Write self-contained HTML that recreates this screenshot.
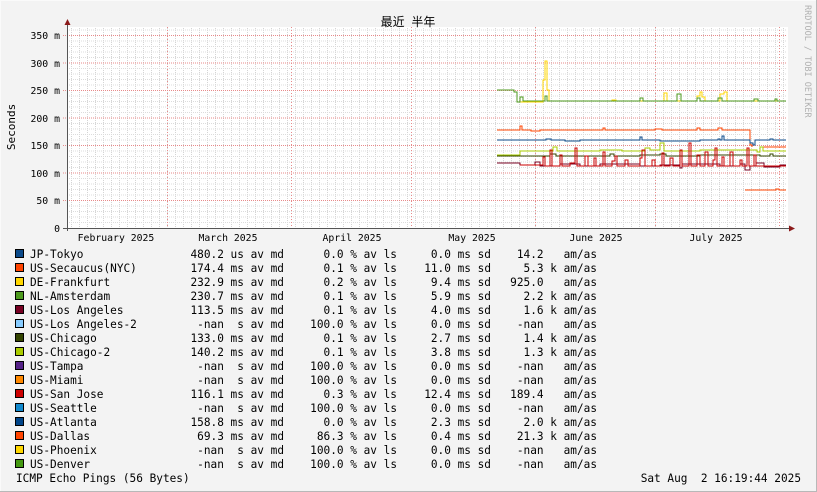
<!DOCTYPE html>
<html><head><meta charset="utf-8"><style>
html,body{margin:0;padding:0;background:#f3f3f3;}
svg{display:block}
text{font-family:"DejaVu Sans Mono","Liberation Mono","Noto Sans CJK SC",monospace;}
</style></head><body>
<svg width="817" height="492" viewBox="0 0 817 492" xmlns="http://www.w3.org/2000/svg">
<defs>
<pattern id="vg" x="71" y="0" width="8" height="2" patternUnits="userSpaceOnUse"><rect x="0" y="0" width="1" height="1" fill="#d4d4d4"/></pattern>
</defs>
<rect x="0" y="0" width="817" height="492" fill="#f3f3f3"/>
<rect x="0.5" y="0.5" width="816" height="491" fill="none" stroke="#d0d0d0"/>
<line x1="0" y1="0.5" x2="817" y2="0.5" stroke="#fafafa"/>
<line x1="0.5" y1="0" x2="0.5" y2="492" stroke="#fafafa"/>
<line x1="0" y1="491.5" x2="817" y2="491.5" stroke="#b8b8b8"/>
<line x1="816.5" y1="0" x2="816.5" y2="492" stroke="#b8b8b8"/>
<rect x="67" y="27" width="721" height="201" fill="#ffffff"/>
<rect x="67" y="27" width="720" height="201" fill="url(#vg)"/>
<g stroke="#dcdcdc" stroke-dasharray="1,1" stroke-width="1">
<line x1="67" x2="787" y1="222.5" y2="222.5"/><line x1="67" x2="787" y1="217" y2="217"/><line x1="67" x2="787" y1="211.5" y2="211.5"/><line x1="67" x2="787" y1="206" y2="206"/>
<line x1="67" x2="787" y1="195" y2="195"/><line x1="67" x2="787" y1="189.5" y2="189.5"/><line x1="67" x2="787" y1="184" y2="184"/><line x1="67" x2="787" y1="178.5" y2="178.5"/>
<line x1="67" x2="787" y1="167.5" y2="167.5"/><line x1="67" x2="787" y1="162" y2="162"/><line x1="67" x2="787" y1="156.5" y2="156.5"/><line x1="67" x2="787" y1="151" y2="151"/>
<line x1="67" x2="787" y1="140" y2="140"/><line x1="67" x2="787" y1="134.5" y2="134.5"/><line x1="67" x2="787" y1="129" y2="129"/><line x1="67" x2="787" y1="123.5" y2="123.5"/>
<line x1="67" x2="787" y1="112.5" y2="112.5"/><line x1="67" x2="787" y1="107" y2="107"/><line x1="67" x2="787" y1="101.5" y2="101.5"/><line x1="67" x2="787" y1="96" y2="96"/>
<line x1="67" x2="787" y1="85" y2="85"/><line x1="67" x2="787" y1="79.5" y2="79.5"/><line x1="67" x2="787" y1="74" y2="74"/><line x1="67" x2="787" y1="68.5" y2="68.5"/>
<line x1="67" x2="787" y1="57.5" y2="57.5"/><line x1="67" x2="787" y1="52" y2="52"/><line x1="67" x2="787" y1="46.5" y2="46.5"/><line x1="67" x2="787" y1="41" y2="41"/>
<line x1="67" x2="787" y1="30" y2="30"/>
</g>
<g stroke="#e88a8a" stroke-dasharray="1,1" stroke-width="1">
<line x1="63" x2="787" y1="200.5" y2="200.5"/><line x1="63" x2="787" y1="173" y2="173"/><line x1="63" x2="787" y1="145.5" y2="145.5"/><line x1="63" x2="787" y1="118" y2="118"/><line x1="63" x2="787" y1="90.5" y2="90.5"/><line x1="63" x2="787" y1="63" y2="63"/><line x1="63" x2="787" y1="35.5" y2="35.5"/>
</g>
<g fill="#e88a8a">
<rect x="167" y="27" width="1" height="204" fill="none"/>
</g>
<g stroke="#e88a8a" stroke-dasharray="1,2" stroke-width="1">
<line x1="167.5" x2="167.5" y1="27" y2="231"/><line x1="291.5" x2="291.5" y1="27" y2="231"/><line x1="411.5" x2="411.5" y1="27" y2="231"/><line x1="535.5" x2="535.5" y1="27" y2="231"/><line x1="655.5" x2="655.5" y1="27" y2="231"/><line x1="779.5" x2="779.5" y1="27" y2="231"/>
</g>
<line x1="67.5" y1="24" x2="67.5" y2="231" stroke="#555" />
<line x1="63" y1="228.5" x2="792" y2="228.5" stroke="#555"/>
<polygon points="64.5,25 70.5,25 67.5,19" fill="#8b1a1a"/>
<polygon points="789,225.5 789,231.5 795,228.5" fill="#8b1a1a"/>
<g font-size="9.8" fill="#000" text-anchor="end">
<text x="60" y="232">0</text><text x="60" y="204">50 m</text><text x="60" y="177">100 m</text><text x="60" y="149">150 m</text><text x="60" y="122">200 m</text><text x="60" y="94">250 m</text><text x="60" y="67">300 m</text><text x="60" y="39">350 m</text>
</g>
<g font-size="9.8" fill="#000" text-anchor="middle">
<text x="116" y="241">February 2025</text><text x="228" y="241">March 2025</text><text x="352" y="241">April 2025</text><text x="472" y="241">May 2025</text><text x="596" y="241">June 2025</text><text x="716" y="241">July 2025</text>
</g>
<text transform="translate(15,127) rotate(-90)" font-size="11" text-anchor="middle" fill="#000">Seconds</text>
<text x="408" y="26" font-size="12" text-anchor="middle" fill="#000" style='font-family:"Liberation Sans","Noto Sans CJK SC",sans-serif'>最近&#160;&#160;半年</text>
<text transform="translate(805,5) rotate(90)" font-size="8.5" fill="#b0b0b0">RRDTOOL / TOBI OETIKER</text>
<g fill="none" stroke-width="1">
<path stroke="#ffd700" d="M497,90 H514 V92 H517 V102 H543 V80 H545 V61 H547 V90 H549 V101 H612 V100 H616 V101 H664 V93 H667 V101 H697 V96 H700 V92 H702 V97 H705 V101 H720 V94 H724 V92 H727 V101 H786"/>
<path stroke="#4d9a1e" d="M497,90 H514 V92 H517 V102 H520 V97 H523 V101 H545 V96 H547 V101 H640 V98 H643 V101 H677 V94 H681 V101 H697 V98 H700 V101 H718 V98 H722 V101 H754 V99 H758 V101 H775 V99 H777 V101 H786"/>
<path stroke="#ff4400" d="M497,130 H520 V126 H522 V130 H531 V131 H540 V130 H603 V128 H605 V130 H655 V129 H662 V130 H697 V128 H700 V130 H718 V128 H722 V130 H750 V145 H752 V147"/>
<path stroke="#ff4400" d="M760,147 H786"/>
<path stroke="#0b4a8a" d="M497,140 H546 V139 H551 V140 H565 V141 H580 V140 H640 V137 H642 V140 H660 V141 H700 V140 H718 V139 H720 V140 H722 V136 H724 V140 H750 V143 H753 V145 H755 V140 H770 V139 H773 V140 H786"/>
<path stroke="#aacc00" d="M497,155 H520 V151 H553 V147 H557 V151 H600 V150 H622 V151 H645 V148 H650 V150 H660 V143 H664 V151 H700 V150 H757 V152 H760 V147 H763 V151 H786"/>
<path stroke="#334400" d="M497,156 H550 V154 H556 V156 H610 V154 H614 V156 H640 V155 H660 V154 H666 V156 H700 V155 H760 V156 H770 V154 H773 V156 H786"/>
<path stroke="#770022" d="M497,163 H520 V165 H535 V162 H540 V166 H560 V164 H580 V166 H600 V164 H640 V166 H660 V165 H680 V168 H682 V164 H720 V166 H740 V164 H745 V170 H750 V166 H756 V163 H764 V167 H780 V165 H786"/>
<path stroke="#cc0000" d="M520,165 H543 V157 H545 V166 H550 V150 H552 V166 H560 V155 H562 V166 H570 V163 H575 V148 H577 V166 H585 V156 H588 V166 H594 V158 H596 V166 H603 V152 H605 V166 H612 V161 H615 V156 H617 V166 H625 V160 H628 V166 H640 V158 H642 V150 H645 V166 H652 V160 H655 V166 H662 V153 H664 V166 H670 V158 H673 V166 H680 V150 H682 V166 H689 V143 H691 V166 H697 V155 H700 V166 H705 V152 H708 V166 H713 V160 H715 V148 H717 V166 H722 V157 H724 V166 H730 V152 H733 V166 H740 V160 H742 V166 H747 V148 H749 V166 H754 V155 H756 V166 H786"/>
<path stroke="#ff4400" d="M745,190 H776 V189 H779 V190 H786"/>
</g>
<g font-size="11.1" fill="#000">
<g stroke="#000" stroke-width="1">
<rect x="15.5" y="249.5" width="8" height="8" fill="#0b4a8a"/>
<rect x="15.5" y="263.5" width="8" height="8" fill="#ff4400"/>
<rect x="15.5" y="277.5" width="8" height="8" fill="#ffd700"/>
<rect x="15.5" y="291.5" width="8" height="8" fill="#4d9a1e"/>
<rect x="15.5" y="305.5" width="8" height="8" fill="#770022"/>
<rect x="15.5" y="319.5" width="8" height="8" fill="#88ccff"/>
<rect x="15.5" y="333.5" width="8" height="8" fill="#334400"/>
<rect x="15.5" y="347.5" width="8" height="8" fill="#aacc00"/>
<rect x="15.5" y="361.5" width="8" height="8" fill="#552288"/>
<rect x="15.5" y="375.5" width="8" height="8" fill="#ff8800"/>
<rect x="15.5" y="389.5" width="8" height="8" fill="#cc0000"/>
<rect x="15.5" y="403.5" width="8" height="8" fill="#1188cc"/>
<rect x="15.5" y="417.5" width="8" height="8" fill="#004488"/>
<rect x="15.5" y="431.5" width="8" height="8" fill="#ff4400"/>
<rect x="15.5" y="445.5" width="8" height="8" fill="#ffd700"/>
<rect x="15.5" y="459.5" width="8" height="8" fill="#449911"/>
</g>
<text x="30" y="258">JP-Tokyo</text><text x="30" y="272">US-Secaucus(NYC)</text><text x="30" y="286">DE-Frankfurt</text><text x="30" y="300">NL-Amsterdam</text><text x="30" y="314">US-Los Angeles</text><text x="30" y="328">US-Los Angeles-2</text><text x="30" y="342">US-Chicago</text><text x="30" y="356">US-Chicago-2</text><text x="30" y="370">US-Tampa</text><text x="30" y="384">US-Miami</text><text x="30" y="398">US-San Jose</text><text x="30" y="412">US-Seattle</text><text x="30" y="426">US-Atlanta</text><text x="30" y="440">US-Dallas</text><text x="30" y="454">US-Phoenix</text><text x="30" y="468">US-Denver</text>
<g text-anchor="end">
<text x="284" y="258">480.2 us av md</text><text x="284" y="272">174.4 ms av md</text><text x="284" y="286">232.9 ms av md</text><text x="284" y="300">230.7 ms av md</text><text x="284" y="314">113.5 ms av md</text><text x="284" y="328">-nan&#160;&#160;s av md</text><text x="284" y="342">133.0 ms av md</text><text x="284" y="356">140.2 ms av md</text><text x="284" y="370">-nan&#160;&#160;s av md</text><text x="284" y="384">-nan&#160;&#160;s av md</text><text x="284" y="398">116.1 ms av md</text><text x="284" y="412">-nan&#160;&#160;s av md</text><text x="284" y="426">158.8 ms av md</text><text x="284" y="440">69.3 ms av md</text><text x="284" y="454">-nan&#160;&#160;s av md</text><text x="284" y="468">-nan&#160;&#160;s av md</text>
<text x="397" y="258">0.0 % av ls</text><text x="397" y="272">0.1 % av ls</text><text x="397" y="286">0.2 % av ls</text><text x="397" y="300">0.1 % av ls</text><text x="397" y="314">0.1 % av ls</text><text x="397" y="328">100.0 % av ls</text><text x="397" y="342">0.1 % av ls</text><text x="397" y="356">0.1 % av ls</text><text x="397" y="370">100.0 % av ls</text><text x="397" y="384">100.0 % av ls</text><text x="397" y="398">0.3 % av ls</text><text x="397" y="412">100.0 % av ls</text><text x="397" y="426">0.0 % av ls</text><text x="397" y="440">86.3 % av ls</text><text x="397" y="454">100.0 % av ls</text><text x="397" y="468">100.0 % av ls</text>
<text x="491" y="258">0.0 ms sd</text><text x="491" y="272">11.0 ms sd</text><text x="491" y="286">9.4 ms sd</text><text x="491" y="300">5.9 ms sd</text><text x="491" y="314">4.0 ms sd</text><text x="491" y="328">0.0 ms sd</text><text x="491" y="342">2.7 ms sd</text><text x="491" y="356">3.8 ms sd</text><text x="491" y="370">0.0 ms sd</text><text x="491" y="384">0.0 ms sd</text><text x="491" y="398">12.4 ms sd</text><text x="491" y="412">0.0 ms sd</text><text x="491" y="426">2.3 ms sd</text><text x="491" y="440">0.4 ms sd</text><text x="491" y="454">0.0 ms sd</text><text x="491" y="468">0.0 ms sd</text>
<text x="597" y="258">14.2&#160;&#160;&#160;am/as</text><text x="597" y="272">5.3 k am/as</text><text x="597" y="286">925.0&#160;&#160;&#160;am/as</text><text x="597" y="300">2.2 k am/as</text><text x="597" y="314">1.6 k am/as</text><text x="597" y="328">-nan&#160;&#160;&#160;am/as</text><text x="597" y="342">1.4 k am/as</text><text x="597" y="356">1.3 k am/as</text><text x="597" y="370">-nan&#160;&#160;&#160;am/as</text><text x="597" y="384">-nan&#160;&#160;&#160;am/as</text><text x="597" y="398">189.4&#160;&#160;&#160;am/as</text><text x="597" y="412">-nan&#160;&#160;&#160;am/as</text><text x="597" y="426">2.0 k am/as</text><text x="597" y="440">21.3 k am/as</text><text x="597" y="454">-nan&#160;&#160;&#160;am/as</text><text x="597" y="468">-nan&#160;&#160;&#160;am/as</text>
<text x="801" y="482">Sat Aug&#160;&#160;2 16:19:44 2025</text>
</g>
<text x="16" y="482">ICMP Echo Pings (56 Bytes)</text>
</g>
</svg>
</body></html>
